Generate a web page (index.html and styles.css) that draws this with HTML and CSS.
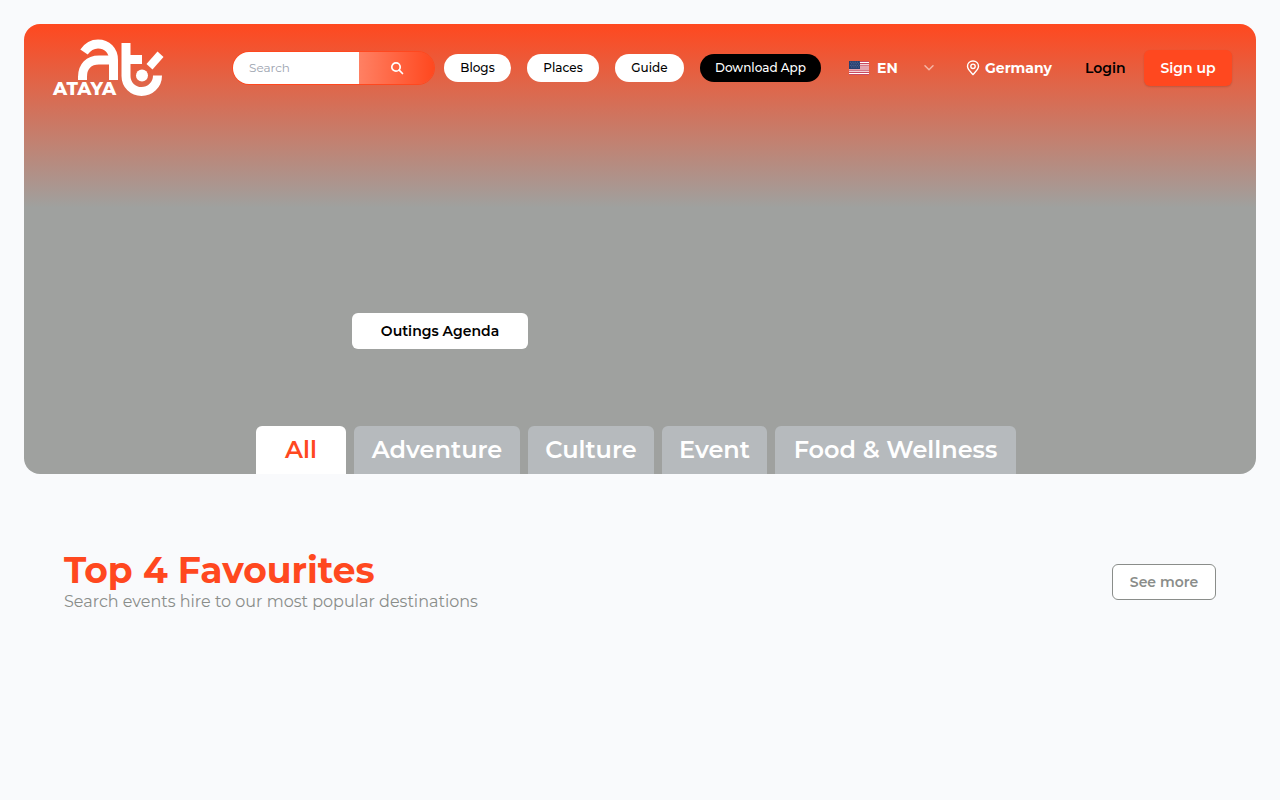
FILE: index.html
```html
<!DOCTYPE html>
<html lang="en">
<head>
<meta charset="utf-8">
<meta name="viewport" content="width=device-width, initial-scale=1">
<title>Ataya</title>
<link rel="stylesheet" href="styles.css">
</head>
<body>
<div class="hero">
  <header class="topbar">
    <a class="logo" href="#" aria-label="Ataya home">
      <svg width="112" height="68" viewBox="52 34 112 68">
        <g fill="none" stroke="#fff" stroke-width="9">
          <path d="M84 52C87.500 47 92 44 98 44C107 44 113.500 50.500 113.500 60V80"/>
          <path d="M82.500 80V77C82.500 66 89 60 99 60H114"/>
          <path d="M126 43V76C126 85 133 91.500 141.500 91.500C150 91.500 157.500 85 157.500 75.500"/>
          <path d="M126 59.500H142"/>
        </g>
        <path fill="#fff" d="M146.500 64L157.500 51.500L163.500 57L152.500 69.500Z"/>
        <circle cx="142" cy="75.500" r="6" fill="#fff"/>
        <text class="logo-text" x="53" y="95">ATAYA</text>
      </svg>
    </a>
    <form class="search" role="search">
      <input class="search-input" type="search" placeholder="Search" aria-label="Search">
      <button class="search-button" type="button" aria-label="Submit search">
        <svg width="14" height="14" viewBox="0 0 14 14" fill="none" stroke="#fff" stroke-width="1.700" stroke-linecap="round"><circle cx="6" cy="6" r="4.200"/><path d="M9.200 9.200L12.500 12.500"/></svg>
      </button>
    </form>
    <nav class="links">
      <a class="pill pill-blogs" href="#">Blogs</a>
      <a class="pill pill-places" href="#">Places</a>
      <a class="pill pill-guide" href="#">Guide</a>
      <a class="pill pill-app" href="#">Download App</a>
    </nav>
    <button class="language" type="button">
      <svg width="20" height="14" viewBox="0 0 20 14">
        <path fill="#fff" d="M0 0H20V14H0Z"/>
        <path stroke="#c94a60" stroke-width="1.200" d="M0 .5H20M0 2.700H20M0 4.900H20M0 7H20M0 9.200H20M0 11.300H20M0 13.500H20"/>
        <path fill="#263f70" d="M0 0H11V8H0Z"/>
        <path stroke="#8290ad" stroke-width=".7" stroke-dasharray=".7 1.100" d="M1 1.200H10.500M2 2.800H10.500M1 4.400H10.500M2 6H10.500"/>
      </svg>
      <span>EN</span>
      <svg class="chevron" width="10" height="6" viewBox="0 0 10 6" fill="none" stroke="#f5b5a5" stroke-width="1.500" stroke-linecap="round" stroke-linejoin="round"><path d="M1 .8L5 4.800L9 .8"/></svg>
    </button>
    <a class="country" href="#">
      <svg width="14" height="16" viewBox="0 0 14 16" fill="none" stroke="#fff" stroke-width="1.400"><path d="M7 14.500C5 12.200 1.500 9.500 1.500 6.300C1.500 3.300 3.900 1 7 1S12.500 3.300 12.500 6.300C12.500 9.500 9 12.200 7 14.500Z"/><circle cx="7" cy="6.300" r="2.200"/></svg>
      <span>Germany</span>
    </a>
    <a class="login" href="#">Login</a>
    <button class="signup" type="button">Sign up</button>
  </header>
  <div class="agenda-row"><button class="agenda" type="button">Outings Agenda</button></div>
  <div class="tabs" role="tablist">
    <button class="tab tab-all" type="button" role="tab" aria-selected="true">All</button>
    <button class="tab tab-adventure" type="button" role="tab" aria-selected="false">Adventure</button>
    <button class="tab tab-culture" type="button" role="tab" aria-selected="false">Culture</button>
    <button class="tab tab-event" type="button" role="tab" aria-selected="false">Event</button>
    <button class="tab tab-food" type="button" role="tab" aria-selected="false">Food &amp; Wellness</button>
  </div>
</div>
<main class="favourites">
  <div>
    <h1 class="title">Top 4 Favourites</h1>
    <p class="subtitle">Search events hire to our most popular destinations</p>
  </div>
  <button class="more" type="button">See more</button>
</main>
</body>
</html>
```
FILE: styles.css
```css
* { box-sizing: border-box; }
body {
  margin: 0;
  padding: 24px;
  background: #f9fafc;
  color: #000;
  font-family: Montserrat, Inter, sans-serif;
}
button, input { font: inherit; }
button { border: 0; padding: 0; cursor: pointer; white-space: nowrap; }
a { color: inherit; text-decoration: none; white-space: nowrap; }
svg { display: block; flex: none; }
.hero {
  display: flex;
  flex-direction: column;
  min-height: 450px;
  overflow: hidden;
  border-radius: 16px;
  background: linear-gradient(#ff481f, #9fa19f 184px);
}
.topbar {
  display: flex;
  align-items: center;
  min-height: 88px;
  padding: 0 24px 0 28px;
}
.logo { margin-right: auto; }
.logo svg { overflow: visible; }
.logo-text { font-size: 18px; font-weight: 800; fill: #fff; }
.search {
  display: flex;
  width: 203px;
  height: 34px;
  overflow: hidden;
  border: 1px solid #ff481f;
  border-radius: 17px;
}
.search-input {
  flex: 1;
  min-width: 0;
  padding: 0 16px 2px;
  border: 0;
  background: #fff;
  font-size: 12px;
}
.search-input::placeholder { color: #9ca3af; }
.search-button {
  display: grid;
  place-items: center;
  width: 75px;
  background: linear-gradient(90deg, #ff8063, #ff481f);
}
.links { display: flex; gap: 16px; margin-left: 9px; }
.pill {
  height: 28px;
  border-radius: 14px;
  background: #fff;
  font-size: 12px;
  font-weight: 500;
  line-height: 28px;
  text-align: center;
}
.pill-blogs { width: 67px; }
.pill-places { width: 72px; }
.pill-guide { width: 69px; }
.pill-app { width: 121px; background: #000; color: #fff; }
.language {
  display: flex;
  align-items: center;
  gap: 8px;
  width: 85px;
  margin-left: 28px;
  background: none;
  color: #fff;
  font-size: 14px;
  font-weight: 700;
}
.chevron { margin-left: auto; }
.country {
  display: flex;
  align-items: center;
  gap: 5px;
  width: 88px;
  margin-left: 32px;
  color: #fff;
  font-size: 14px;
  font-weight: 700;
}
.login { width: 43px; margin-left: 31px; font-size: 14px; font-weight: 600; }
.signup {
  width: 88px;
  height: 36px;
  margin-left: 16px;
  border-radius: 6px;
  background: #ff481f;
  box-shadow: 0 1px 2px rgb(0 0 0 / 15%);
  color: #fff;
  font-size: 14px;
  font-weight: 600;
}
.agenda-row { margin: auto 0; padding: 124px 328px 0; }
.agenda {
  width: 176px;
  height: 36px;
  border-radius: 6px;
  background: #fff;
  font-size: 14px;
  font-weight: 600;
}
.tabs { display: flex; justify-content: center; gap: 8px; padding-right: 8px; }
.tab {
  height: 48px;
  padding-bottom: 2px;
  border-radius: 6px 6px 0 0;
  background: #b6babd;
  color: #fff;
  font-size: 24px;
  font-weight: 600;
}
.tab-all { width: 90px; background: #fff; color: #ff481f; }
.tab-adventure { width: 166px; }
.tab-culture { width: 126px; }
.tab-event { width: 105px; }
.tab-food { width: 241px; }
.favourites {
  display: flex;
  align-items: center;
  justify-content: space-between;
  padding: 76px 40px 0;
}
.title { margin: 0; color: #ff481f; font-size: 36px; font-weight: 700; line-height: 40px; }
.subtitle { margin: 0; color: #8a8d8a; font-size: 16px; font-weight: 400; line-height: 24px; }
.more {
  width: 104px;
  height: 36px;
  border: 1px solid #8a8d8a;
  border-radius: 6px;
  background: #fff;
  color: #8a8d8a;
  font-size: 14px;
  font-weight: 600;
}
```
